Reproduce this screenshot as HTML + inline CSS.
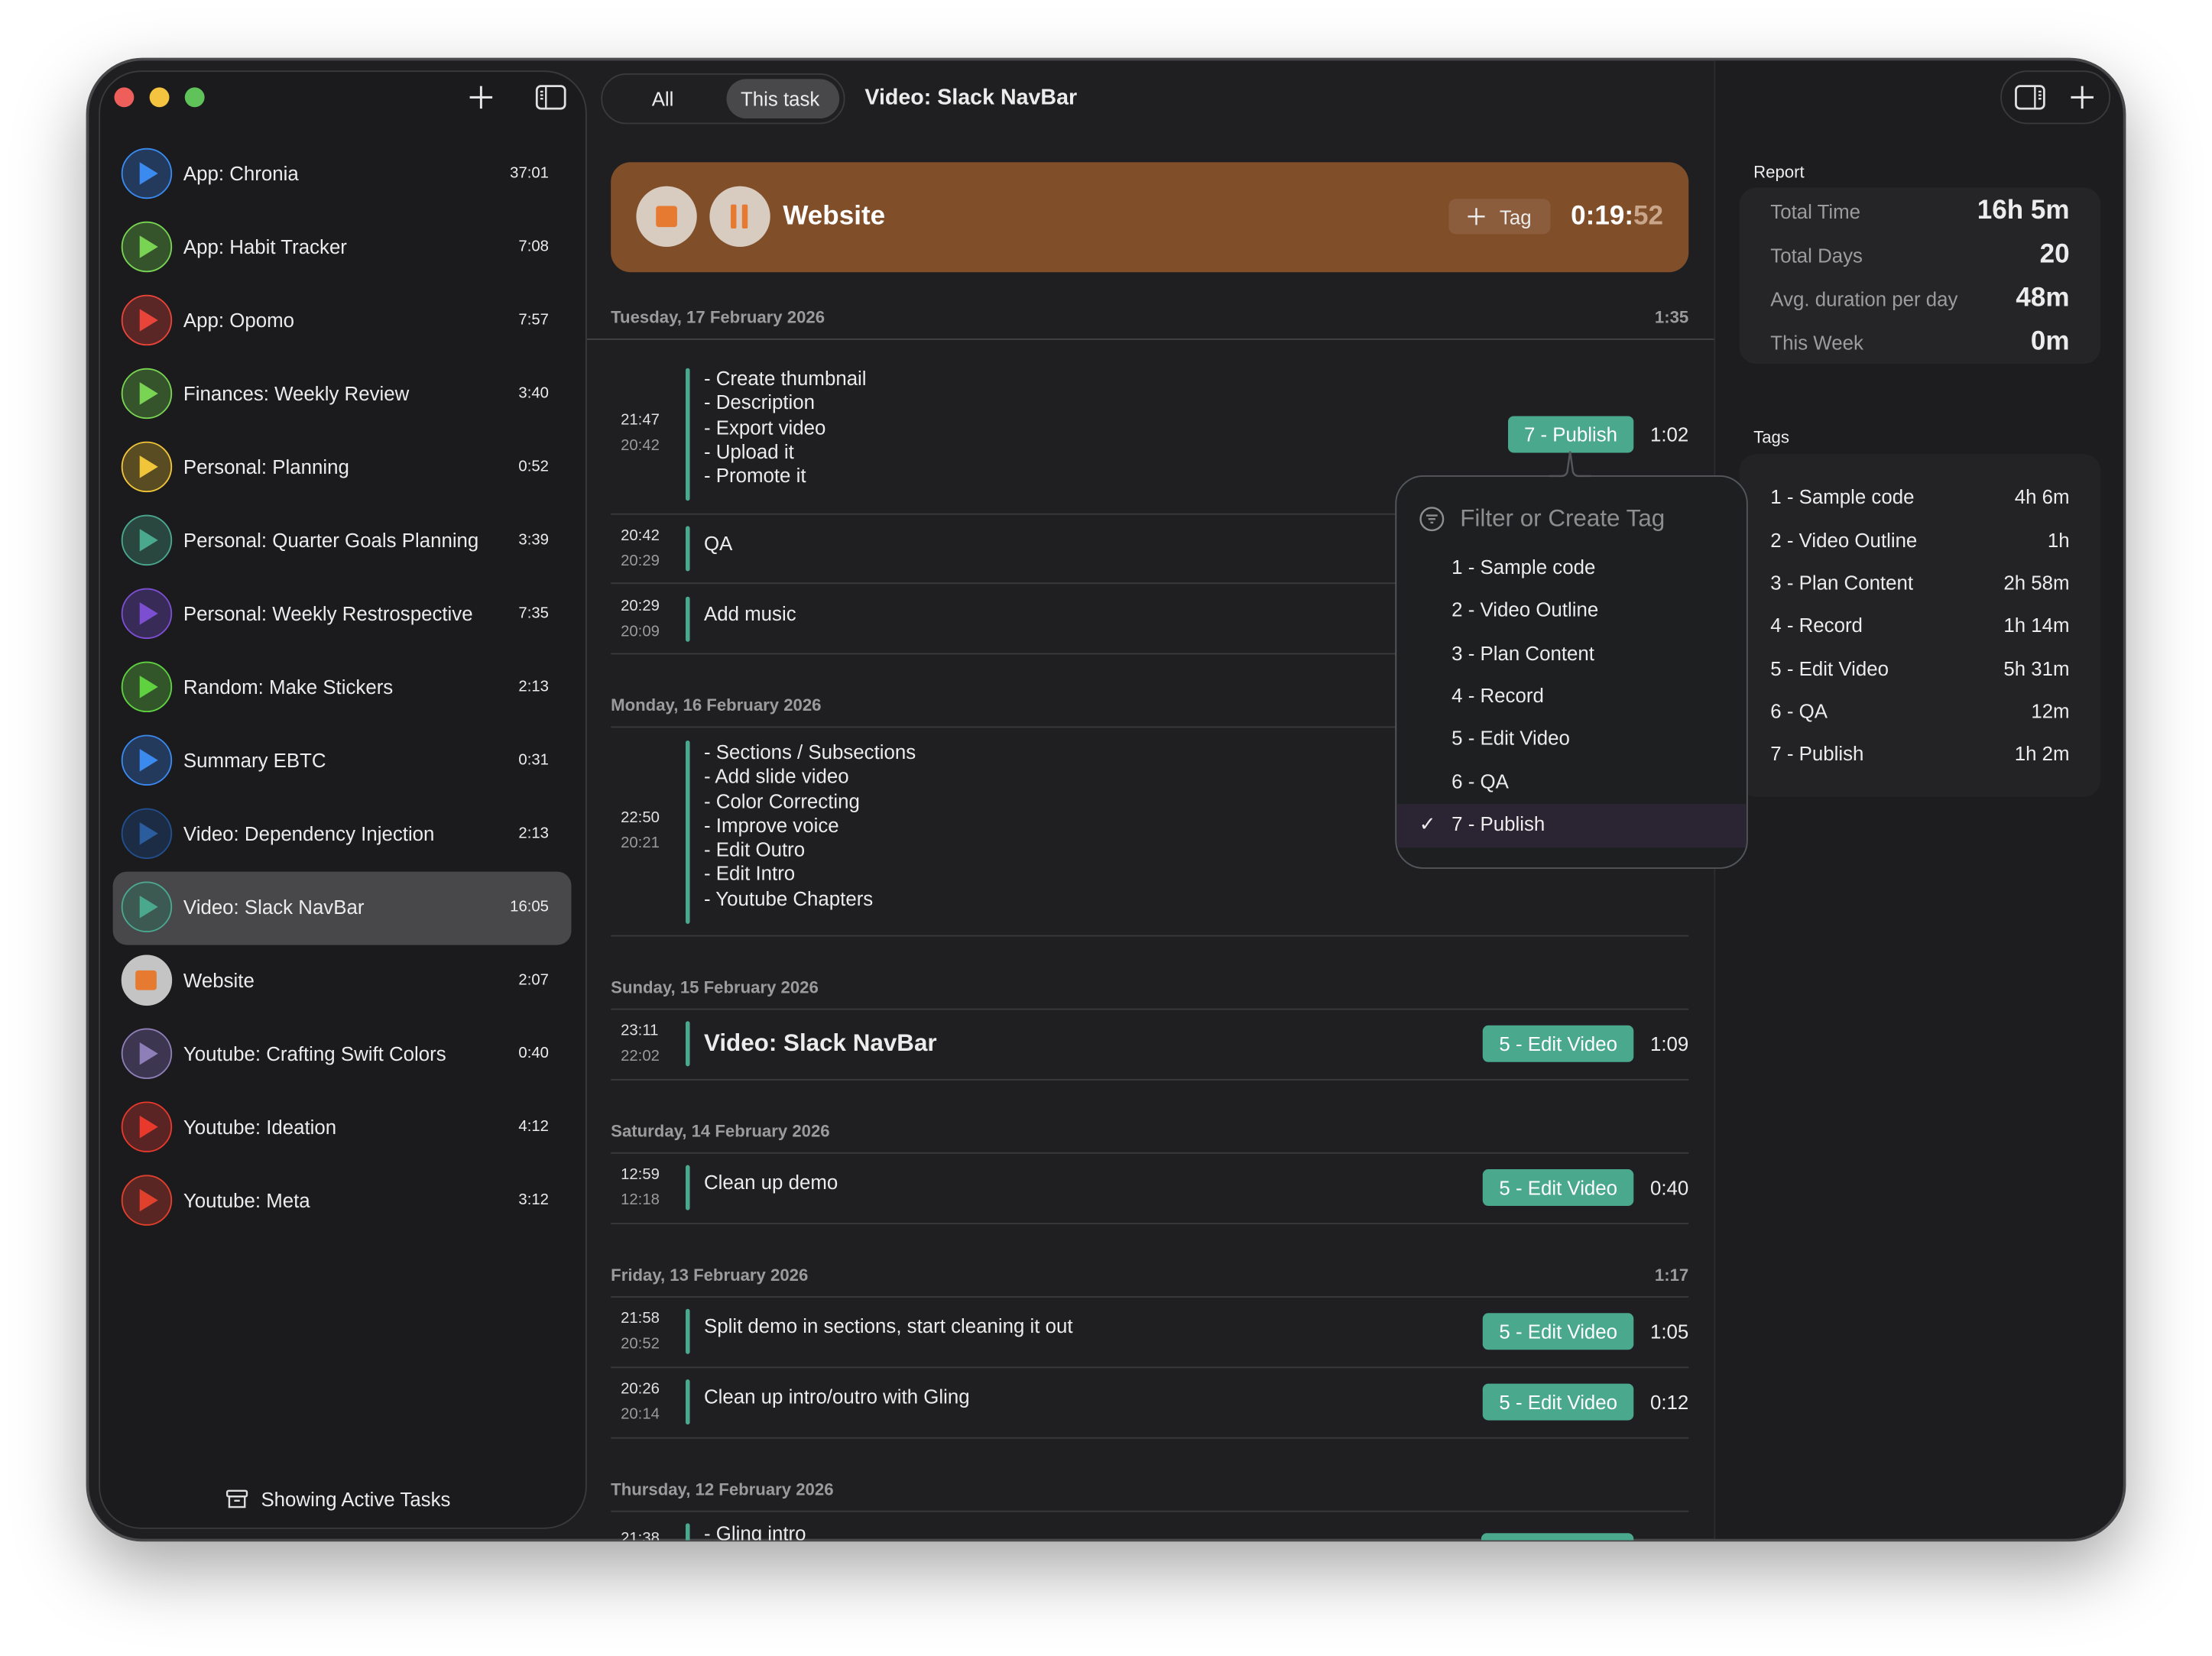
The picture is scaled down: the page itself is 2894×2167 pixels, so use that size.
<!DOCTYPE html>
<html><head><meta charset="utf-8"><style>
*{margin:0;padding:0;box-sizing:border-box}
html,body{width:2894px;height:2166px;overflow:hidden;background:#fff}
#w{position:absolute;left:0;top:0;width:1568px;height:1174px;transform:scale(1.84566);transform-origin:0 0;font-family:"Liberation Sans",sans-serif;color:#ececec}
.a{position:absolute}
.t{position:absolute;white-space:nowrap}
.row .c{position:absolute;left:86px;width:36px;height:36px;border-radius:50%;border:1.5px solid}
.row .c i{position:absolute;left:12px;top:9px;width:0;height:0;border-top:8px solid transparent;border-bottom:8px solid transparent;border-left:13px solid}
.nm{left:130px;font-size:14px;line-height:18px}
.tm{right:1179px;font-size:11px;line-height:14px}
.dh{position:absolute;left:433px;font-size:12px;font-weight:bold;color:#9b9b9d;line-height:14px}
.dr{position:absolute;right:371px;font-size:12px;font-weight:bold;color:#9b9b9d;line-height:14px}
.ln{position:absolute;left:433px;width:764px;height:1px;background:#3a3a3c}
.tt{position:absolute;left:440px;font-size:11px;line-height:14px;color:#e0e0e0}
.tt2{color:#9a9a9a}
.bar{position:absolute;left:486px;width:3px;border-radius:2px;background:#4aa88d}
.tx{position:absolute;left:499px;font-size:14px;line-height:17.3px;white-space:nowrap}
.pill{position:absolute;right:410px;height:26px;border-radius:4px;background:#4aa88d;color:#fff;font-size:14px;line-height:26px;padding:0 11.5px}
.du{position:absolute;right:371px;font-size:14px;line-height:18px}
.tg{position:absolute;left:1255px;font-size:14px;line-height:18px}
.tv{position:absolute;right:101px;font-size:14px;line-height:18px}
.pi{position:absolute;left:1029px;font-size:14px;line-height:18px}
</style></head><body><div id="w">
<div class="a" style="left:61px;top:41px;width:1446px;height:1052px;border-radius:40px;background:#1f1f21;border:2px solid #48484a;box-shadow:0 20px 50px rgba(0,0,0,.35);overflow:hidden">
</div>
<div class="a" style="left:1215px;top:43px;width:290px;height:1048px;border-radius:0 38px 38px 0;background:#1d1d1f;border-left:1px solid #2e2e30"></div>
<div class="a" style="left:70px;top:50px;width:346px;height:1034px;border-radius:30px;background:#1b1b1d;border:1px solid #3a3a3c"></div>
<div class="a" style="left:81px;top:62px;width:14px;height:14px;border-radius:50%;background:#ee5f5b"></div>
<div class="a" style="left:106px;top:62px;width:14px;height:14px;border-radius:50%;background:#f4c33f"></div>
<div class="a" style="left:131px;top:62px;width:14px;height:14px;border-radius:50%;background:#5fc35a"></div>
<svg class="a" style="left:331px;top:59px" width="20" height="20" viewBox="0 0 20 20"><path d="M10 2v16M2 10h16" stroke="#e8e8e8" stroke-width="1.6"/></svg>
<svg class="a" style="left:379px;top:59px" width="24" height="20" viewBox="0 0 24 20"><rect x="1.5" y="2" width="20" height="16" rx="3" fill="none" stroke="#e0e0e0" stroke-width="1.5"/><path d="M8 2v16M4 6h2M4 8.5h2M4 11h2" stroke="#e0e0e0" stroke-width="1.3"/></svg>

<div class="a" style="left:80px;top:618px;width:325px;height:52px;border-radius:10px;background:#48484a"></div>

<div class="row">
<div class="c" style="top:105px;border-color:#3a8af0;background:#243a5c;color:#3a8af0"><i></i></div><div class="t nm" style="top:114px">App: Chronia</div><div class="t tm" style="top:116px">37:01</div>
<div class="c" style="top:157px;border-color:#79d453;background:#36542c;color:#79d453"><i></i></div><div class="t nm" style="top:166px">App: Habit Tracker</div><div class="t tm" style="top:168px">7:08</div>
<div class="c" style="top:209px;border-color:#e8443a;background:#5b2626;color:#e8443a"><i></i></div><div class="t nm" style="top:218px">App: Opomo</div><div class="t tm" style="top:220px">7:57</div>
<div class="c" style="top:261px;border-color:#79d453;background:#36542c;color:#79d453"><i></i></div><div class="t nm" style="top:270px">Finances: Weekly Review</div><div class="t tm" style="top:272px">3:40</div>
<div class="c" style="top:313px;border-color:#f0c53a;background:#5a4c22;color:#f0c53a"><i></i></div><div class="t nm" style="top:322px">Personal: Planning</div><div class="t tm" style="top:324px">0:52</div>
<div class="c" style="top:365px;border-color:#4aa88d;background:#29473f;color:#4aa88d"><i></i></div><div class="t nm" style="top:374px">Personal: Quarter Goals Planning</div><div class="t tm" style="top:376px">3:39</div>
<div class="c" style="top:417px;border-color:#7c4fd2;background:#382b58;color:#7c4fd2"><i></i></div><div class="t nm" style="top:426px">Personal: Weekly Restrospective</div><div class="t tm" style="top:428px">7:35</div>
<div class="c" style="top:469px;border-color:#5fd240;background:#33552a;color:#5fd240"><i></i></div><div class="t nm" style="top:478px">Random: Make Stickers</div><div class="t tm" style="top:480px">2:13</div>
<div class="c" style="top:521px;border-color:#3a8af0;background:#243a5c;color:#3a8af0"><i></i></div><div class="t nm" style="top:530px">Summary EBTC</div><div class="t tm" style="top:532px">0:31</div>
<div class="c" style="top:573px;border-color:#22508e;background:#1c2c45;color:#2a5c9e"><i></i></div><div class="t nm" style="top:582px">Video: Dependency Injection</div><div class="t tm" style="top:584px">2:13</div>
<div class="c" style="top:625px;border-color:#4aa88d;background:#3d5a52;color:#4aa88d"><i></i></div><div class="t nm" style="top:634px">Video: Slack NavBar</div><div class="t tm" style="top:636px">16:05</div>
<div class="c" style="top:677px;border-color:#c4c4c4;background:#c4c4c4"></div><div class="a" style="left:96px;top:688px;width:15px;height:14px;border-radius:2px;background:#e57a30"></div><div class="t nm" style="top:686px">Website</div><div class="t tm" style="top:688px">2:07</div>
<div class="c" style="top:729px;border-color:#8f7fb8;background:#3c3650;color:#8f7fb8"><i></i></div><div class="t nm" style="top:738px">Youtube: Crafting Swift Colors</div><div class="t tm" style="top:740px">0:40</div>
<div class="c" style="top:781px;border-color:#e8392c;background:#5a2424;color:#e8392c"><i></i></div><div class="t nm" style="top:790px">Youtube: Ideation</div><div class="t tm" style="top:792px">4:12</div>
<div class="c" style="top:833px;border-color:#e0402c;background:#5a2624;color:#e0402c"><i></i></div><div class="t nm" style="top:842px">Youtube: Meta</div><div class="t tm" style="top:844px">3:12</div>
</div>
<svg class="a" style="left:160px;top:1056px" width="16" height="14" viewBox="0 0 16 14"><rect x="1" y="1" width="14" height="4" rx="1" fill="none" stroke="#ddd" stroke-width="1.3"/><path d="M2.5 5v7.5h11V5M6 8h4" fill="none" stroke="#ddd" stroke-width="1.3"/></svg>
<div class="t" style="left:185px;top:1054px;font-size:14px;line-height:18px">Showing Active Tasks</div>

<div class="a" style="left:426px;top:52px;width:173px;height:36px;border-radius:18px;border:1px solid #3a3a3c;background:#202022"></div>
<div class="a" style="left:515px;top:56px;width:80px;height:28px;border-radius:14px;background:#48484a"></div>
<div class="t" style="left:462px;top:61px;font-size:14px;line-height:18px">All</div>
<div class="t" style="left:525px;top:61px;font-size:14px;line-height:18px">This task</div>
<div class="t" style="left:613px;top:60px;font-size:15.5px;line-height:20px;font-weight:bold">Video: Slack NavBar</div>

<div class="a" style="left:1418px;top:50px;width:78px;height:38px;border-radius:19px;border:1px solid #3a3a3c"></div>
<svg class="a" style="left:1427px;top:59px" width="24" height="20" viewBox="0 0 24 20"><rect x="2" y="2" width="20" height="16" rx="3" fill="none" stroke="#e0e0e0" stroke-width="1.5"/><path d="M15.5 2v16M18 6h2M18 8.5h2M18 11h2" stroke="#e0e0e0" stroke-width="1.3"/></svg>
<svg class="a" style="left:1466px;top:59px" width="20" height="20" viewBox="0 0 20 20"><path d="M10 2v16M2 10h16" stroke="#e8e8e8" stroke-width="1.6"/></svg>

<div class="a" style="left:433px;top:115px;width:764px;height:78px;border-radius:14px;background:#804e29"></div>
<div class="a" style="left:451px;top:132px;width:43px;height:43px;border-radius:50%;background:#d8cbc0"></div>
<div class="a" style="left:465px;top:146px;width:15px;height:15px;border-radius:2px;background:#e57a30"></div>
<div class="a" style="left:503px;top:132px;width:43px;height:43px;border-radius:50%;background:#d8cbc0"></div>
<div class="a" style="left:518px;top:145px;width:4px;height:17px;border-radius:1px;background:#e57a30"></div>
<div class="a" style="left:526px;top:145px;width:4px;height:17px;border-radius:1px;background:#e57a30"></div>
<div class="t" style="left:555px;top:142px;font-size:19px;line-height:23px;font-weight:bold;color:#fff">Website</div>
<div class="a" style="left:1027px;top:141px;width:72px;height:25px;border-radius:5px;background:rgba(255,255,255,.09)"></div>
<svg class="a" style="left:1040px;top:147px" width="13" height="13" viewBox="0 0 13 13"><path d="M6.5 0.5v12M0.5 6.5h12" stroke="#eee" stroke-width="1.3"/></svg>
<div class="t" style="left:1063px;top:145px;font-size:14px;line-height:18px">Tag</div>
<div class="t" style="right:389px;top:142px;font-size:19px;line-height:23px;font-weight:bold;color:#fff">0:19:<span style="color:#c9a58a">52</span></div>

<div class="dh" style="top:218px">Tuesday, 17 February 2026</div><div class="dr" style="top:218px">1:35</div>
<div class="a" style="left:416px;top:240px;width:799px;height:1px;background:#444"></div>
<div class="tt" style="top:291px">21:47</div><div class="tt tt2" style="top:309px">20:42</div>
<div class="bar" style="top:261px;height:94px"></div>
<div class="tx" style="top:260px">- Create thumbnail<br>- Description<br>- Export video<br>- Upload it<br>- Promote it</div>
<div class="pill" style="top:295px">7 - Publish</div><div class="du" style="top:299px">1:02</div>
<div class="ln" style="top:364px"></div>
<div class="tt" style="top:373px">20:42</div><div class="tt tt2" style="top:391px">20:29</div>
<div class="bar" style="top:373px;height:32px"></div><div class="tx" style="top:377px">QA</div>
<div class="ln" style="top:413px"></div>
<div class="tt" style="top:423px">20:29</div><div class="tt tt2" style="top:441px">20:09</div>
<div class="bar" style="top:423px;height:32px"></div><div class="tx" style="top:427px">Add music</div>
<div class="ln" style="top:463px"></div>

<div class="dh" style="top:493px">Monday, 16 February 2026</div>
<div class="ln" style="top:515px"></div>
<div class="tt" style="top:573px">22:50</div><div class="tt tt2" style="top:591px">20:21</div>
<div class="bar" style="top:525px;height:130px"></div>
<div class="tx" style="top:525px">- Sections / Subsections<br>- Add slide video<br>- Color Correcting<br>- Improve voice<br>- Edit Outro<br>- Edit Intro<br>- Youtube Chapters</div>
<div class="ln" style="top:663px"></div>

<div class="dh" style="top:693px">Sunday, 15 February 2026</div>
<div class="ln" style="top:715px"></div>
<div class="tt" style="top:724px">23:11</div><div class="tt tt2" style="top:742px">22:02</div>
<div class="bar" style="top:724px;height:32px"></div>
<div class="tx" style="top:730px;font-size:17px;line-height:20px;font-weight:bold">Video: Slack NavBar</div>
<div class="pill" style="top:727px">5 - Edit Video</div><div class="du" style="top:731px">1:09</div>
<div class="ln" style="top:765px"></div>

<div class="dh" style="top:795px">Saturday, 14 February 2026</div>
<div class="ln" style="top:817px"></div>
<div class="tt" style="top:826px">12:59</div><div class="tt tt2" style="top:844px">12:18</div>
<div class="bar" style="top:826px;height:32px"></div><div class="tx" style="top:830px">Clean up demo</div>
<div class="pill" style="top:829px">5 - Edit Video</div><div class="du" style="top:833px">0:40</div>
<div class="ln" style="top:867px"></div>

<div class="dh" style="top:897px">Friday, 13 February 2026</div><div class="dr" style="top:897px">1:17</div>
<div class="ln" style="top:919px"></div>
<div class="tt" style="top:928px">21:58</div><div class="tt tt2" style="top:946px">20:52</div>
<div class="bar" style="top:928px;height:32px"></div><div class="tx" style="top:932px">Split demo in sections, start cleaning it out</div>
<div class="pill" style="top:931px">5 - Edit Video</div><div class="du" style="top:935px">1:05</div>
<div class="ln" style="top:969px"></div>
<div class="tt" style="top:978px">20:26</div><div class="tt tt2" style="top:996px">20:14</div>
<div class="bar" style="top:978px;height:32px"></div><div class="tx" style="top:982px">Clean up intro/outro with Gling</div>
<div class="pill" style="top:981px">5 - Edit Video</div><div class="du" style="top:985px">0:12</div>
<div class="ln" style="top:1019px"></div>

<div class="dh" style="top:1049px">Thursday, 12 February 2026</div>
<div class="ln" style="top:1071px"></div>
<div class="a" style="left:416px;top:1078px;width:799px;height:14px;overflow:hidden">
 <div class="tt" style="left:24px;top:6px">21:38</div>
 <div class="bar" style="left:70px;top:2px;height:20px"></div>
 <div class="tx" style="left:83px;top:1px">- Gling intro</div>
 <div class="a" style="left:634px;top:9px;width:108px;height:20px;border-radius:4px;background:#4aa88d"></div>
</div>

<div class="t" style="left:1243px;top:115px;font-size:12px;line-height:14px">Report</div>
<div class="a" style="left:1233px;top:133px;width:256px;height:125px;border-radius:12px;background:#252527"></div>
<div class="t" style="left:1255px;top:141px;font-size:14px;line-height:18px;color:#9c9c9e">Total Time</div><div class="t" style="right:101px;top:138px;font-size:19px;line-height:23px;font-weight:bold">16h 5m</div>
<div class="t" style="left:1255px;top:172px;font-size:14px;line-height:18px;color:#9c9c9e">Total Days</div><div class="t" style="right:101px;top:169px;font-size:19px;line-height:23px;font-weight:bold">20</div>
<div class="t" style="left:1255px;top:203px;font-size:14px;line-height:18px;color:#9c9c9e">Avg. duration per day</div><div class="t" style="right:101px;top:200px;font-size:19px;line-height:23px;font-weight:bold">48m</div>
<div class="t" style="left:1255px;top:234px;font-size:14px;line-height:18px;color:#9c9c9e">This Week</div><div class="t" style="right:101px;top:231px;font-size:19px;line-height:23px;font-weight:bold">0m</div>

<div class="t" style="left:1243px;top:303px;font-size:12px;line-height:14px">Tags</div>
<div class="a" style="left:1233px;top:322px;width:256px;height:243px;border-radius:12px;background:#232325"></div>
<div class="tg" style="top:343px">1 - Sample code</div><div class="tv" style="top:343px">4h 6m</div>
<div class="tg" style="top:374px">2 - Video Outline</div><div class="tv" style="top:374px">1h</div>
<div class="tg" style="top:404px">3 - Plan Content</div><div class="tv" style="top:404px">2h 58m</div>
<div class="tg" style="top:434px">4 - Record</div><div class="tv" style="top:434px">1h 14m</div>
<div class="tg" style="top:465px">5 - Edit Video</div><div class="tv" style="top:465px">5h 31m</div>
<div class="tg" style="top:495px">6 - QA</div><div class="tv" style="top:495px">12m</div>
<div class="tg" style="top:525px">7 - Publish</div><div class="tv" style="top:525px">1h 2m</div>

<div class="a" style="left:989px;top:337px;width:250px;height:279px;border-radius:20px;background:#1e1f21;border:1px solid #55575a;overflow:hidden">
 <div class="a" style="left:0;top:232px;width:250px;height:31px;background:#2b2433"></div>
</div>
<svg class="a" style="left:1098px;top:318px;width:30px;height:21px" width="30" height="21" viewBox="0 0 30 21"><path d="M0 20 L9 20 Q12 20 13 17 L15 3 L17 17 Q18 20 21 20 L30 20 L30 21 L0 21 Z" fill="#1e1f21"/><path d="M0 19.5 L9 19.5 Q12 19.5 13 16.5 L15 2 L17 16.5 Q18 19.5 21 19.5 L30 19.5" fill="none" stroke="#55575a" stroke-width="1.3"/></svg>
<svg class="a" style="left:1006px;top:359px" width="18" height="18" viewBox="0 0 18 18"><circle cx="9" cy="9" r="8" fill="none" stroke="#8e8e90" stroke-width="1.3"/><path d="M5 6.5h8M6.5 9h5M8 11.5h2" stroke="#8e8e90" stroke-width="1.3"/></svg>
<div class="t" style="left:1035px;top:358px;font-size:17px;line-height:20px;color:#8e8e90">Filter or Create Tag</div>
<div class="pi" style="top:393px">1 - Sample code</div>
<div class="pi" style="top:423px">2 - Video Outline</div>
<div class="pi" style="top:454px">3 - Plan Content</div>
<div class="pi" style="top:484px">4 - Record</div>
<div class="pi" style="top:514px">5 - Edit Video</div>
<div class="pi" style="top:545px">6 - QA</div>
<div class="t" style="left:1006px;top:575px;font-size:14px;line-height:18px">✓</div>
<div class="pi" style="top:575px">7 - Publish</div>
</div></body></html>
